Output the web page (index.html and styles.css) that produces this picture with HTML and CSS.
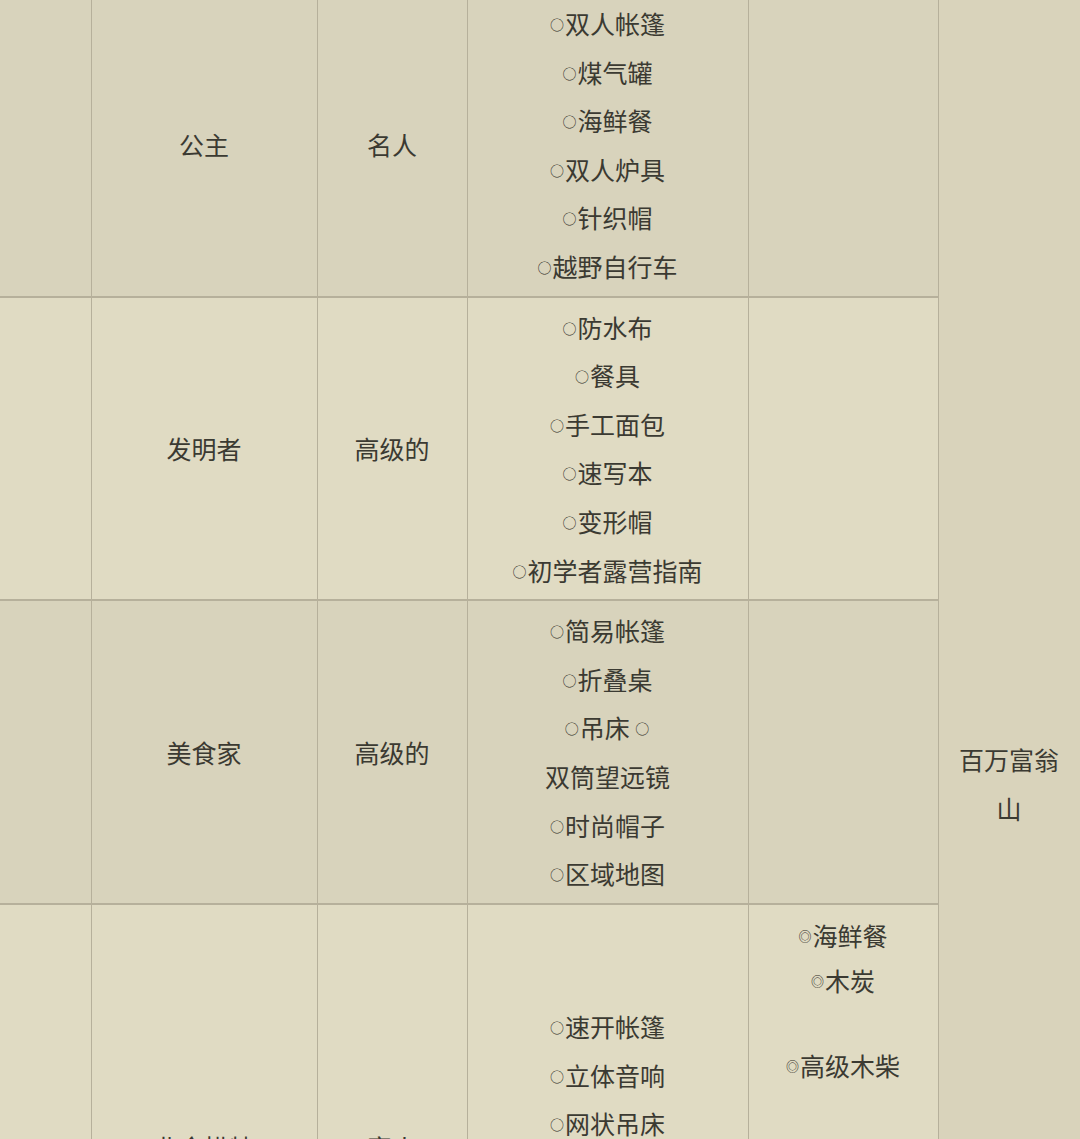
FILE: index.html
```html
<!DOCTYPE html>
<html lang="zh">
<head>
<meta charset="utf-8">
<title>表格</title>
<link rel="stylesheet" href="styles.css">
</head>
<body>
<div class="wrap">
<table class="grid">
  <colgroup>
    <col class="c1"><col class="c2"><col class="c3"><col class="c4"><col class="c5"><col class="c6">
  </colgroup>
  <tbody>
    <tr class="dark">
      <td class="first"></td>
      <td>公主</td>
      <td>名人</td>
      <td class="list">
        <div><span class="mk">○</span>双人帐篷</div>
        <div><span class="mk">○</span>煤气罐</div>
        <div><span class="mk">○</span>海鲜餐</div>
        <div><span class="mk">○</span>双人炉具</div>
        <div><span class="mk">○</span>针织帽</div>
        <div><span class="mk">○</span>越野自行车</div>
      </td>
      <td></td>
      <td class="side" rowspan="5"><div class="sidetext">百万富翁山</div></td>
    </tr>
    <tr class="light">
      <td class="first"></td>
      <td>发明者</td>
      <td>高级的</td>
      <td class="list">
        <div><span class="mk">○</span>防水布</div>
        <div><span class="mk">○</span>餐具</div>
        <div><span class="mk">○</span>手工面包</div>
        <div><span class="mk">○</span>速写本</div>
        <div><span class="mk">○</span>变形帽</div>
        <div><span class="mk">○</span>初学者露营指南</div>
      </td>
      <td></td>
    </tr>
    <tr class="dark">
      <td class="first"></td>
      <td>美食家</td>
      <td>高级的</td>
      <td class="list">
        <div><span class="mk">○</span>简易帐篷</div>
        <div><span class="mk">○</span>折叠桌</div>
        <div><span class="mk">○</span>吊床 <span class="mk">○</span></div>
        <div>双筒望远镜</div>
        <div><span class="mk">○</span>时尚帽子</div>
        <div><span class="mk">○</span>区域地图</div>
      </td>
      <td></td>
    </tr>
    <tr class="light tall">
      <td class="first"></td>
      <td>业余模特</td>
      <td>富人</td>
      <td class="list">
        <div><span class="mk">○</span>速开帐篷</div>
        <div><span class="mk">○</span>立体音响</div>
        <div><span class="mk">○</span>网状吊床</div>
        <div><span class="mk">○</span>野餐垫</div>
        <div><span class="mk">○</span>渔夫帽</div>
        <div><span class="mk">○</span>露营灯</div>
      </td>
      <td class="extra">
        <div class="eline"><span class="mk2">◎</span>海鲜餐</div>
        <div class="eline"><span class="mk2">◎</span>木炭</div>
        <div class="gap"></div>
        <div class="eline"><span class="mk2">◎</span>高级木柴</div>
      </td>
    </tr>
    <tr class="dark short">
      <td class="first"></td>
      <td>旅行者</td>
      <td>普通的</td>
      <td class="list">
        <div><span class="mk">○</span>睡袋</div>
      </td>
      <td></td>
    </tr>
  </tbody>
</table>
</div>
</body>
</html>
```

FILE: styles.css
```css
html, body {
  margin: 0;
  padding: 0;
  background: #d9d3bb;
  overflow: hidden;
}

.wrap {
  margin-top: -8px;
}

.grid {
  width: 1080px;
  table-layout: fixed;
  border-collapse: collapse;
  font-family: "Noto Sans CJK SC", "Noto Sans", sans-serif;
  font-size: 25px;
  color: #3b3a32;
}

.c1 { width: 91px; }
.c2 { width: 226px; }
.c3 { width: 150px; }
.c4 { width: 281px; }
.c5 { width: 190px; }
.c6 { width: 142px; }

.grid td {
  border-left: 1px solid #b6b09b;
  border-right: 1px solid #b6b09b;
  border-top: 2px solid #b6b09b;
  border-bottom: 2px solid #b6b09b;
  padding: 5px 8px;
  text-align: center;
  vertical-align: middle;
  line-height: 48.6px;
}

.grid td.first {
  border-left: none;
}

.list div {
  height: 48.6px;
  line-height: 48.6px;
  white-space: nowrap;
}

.dark td { background: #d8d3bc; }
.light td { background: #e0dbc3; }

.grid td.side {
  background: #d9d3bb;
  line-height: 49px;
  padding: 0 14px;
}

.sidetext {
  padding-bottom: 4px;
}

.tall { height: 488px; }
.short { height: 187px; }

.grid td.extra {
  vertical-align: top;
  padding-top: 8px;
}

.eline {
  height: 45px;
  line-height: 45px;
  white-space: nowrap;
}

.gap { height: 40px; }

.mk {
  font-size: 14px;
  line-height: 0;
  vertical-align: 4px;
  margin-right: 1px;
  color: #2f2e27;
}

.mk2 {
  font-size: 13px;
  line-height: 0;
  vertical-align: 5px;
  margin-right: 1px;
  color: #2f2e27;
}
```
